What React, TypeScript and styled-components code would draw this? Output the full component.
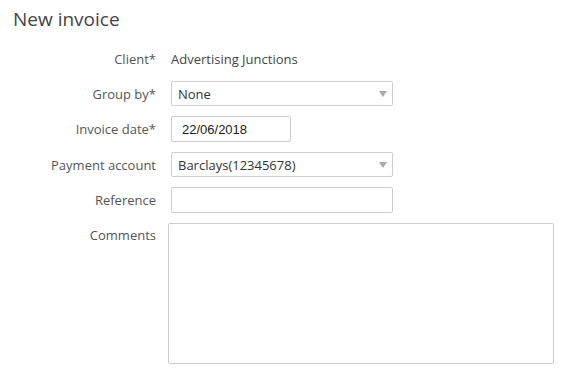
import React from 'react'
import styled, { createGlobalStyle } from 'styled-components'

const GlobalStyle = createGlobalStyle`
  body {
    margin: 0;
    background: #fff;
    font-family: "Open Sans", "Noto Sans", sans-serif;
  }
`

const Page = styled.div`
  padding: 6px 13px 0;
`

const Title = styled.h1`
  margin: 0 0 15px;
  font-size: 19px;
  font-weight: 400;
  color: #444;
  line-height: 26px;
`

const Form = styled.div`
  display: flex;
  flex-direction: column;
  gap: 10px;
`

const Row = styled.div<{ $top?: boolean }>`
  display: grid;
  grid-template-columns: 143px 1fr;
  column-gap: 15px;
  align-items: ${({ $top }) => ($top ? 'start' : 'center')};
  min-height: 24px;
`

const Label = styled.label<{ $top?: boolean }>`
  text-align: right;
  font-size: 13px;
  color: #555;
  padding-top: ${({ $top }) => ($top ? '3px' : '0')};
`

const Value = styled.span`
  font-size: 13px;
  color: #444;
`

const SelectBox = styled.div`
  position: relative;
  width: 222px;
  height: 25px;
  box-sizing: border-box;
  border: 1px solid #ccc;
  border-radius: 2px;
  display: flex;
  align-items: center;
  padding-left: 6px;
  font-size: 13px;
  color: #333;
`

const Caret = styled.span`
  position: absolute;
  right: 5px;
  top: 9px;
  width: 0;
  height: 0;
  border-left: 4px solid transparent;
  border-right: 4px solid transparent;
  border-top: 6px solid #aaa;
`

const TextInput = styled.input<{ $width: number }>`
  width: ${({ $width }) => $width}px;
  height: 26px;
  box-sizing: border-box;
  border: 1px solid #ccc;
  border-radius: 2px;
  padding: 0 10px;
  font-family: "Liberation Sans", Arial, sans-serif;
  font-size: 13px;
  color: #222;
  outline: none;
`

const Comments = styled.textarea`
  margin-left: -3px;
  width: 386px;
  height: 141px;
  box-sizing: border-box;
  border: 1px solid #ccc;
  border-radius: 2px;
  resize: none;
  outline: none;
`

const Select = ({ value }: { value: string }) => (
  <SelectBox>
    {value}
    <Caret />
  </SelectBox>
)

export default function App() {
  return (
    <Page>
      <GlobalStyle />
      <Title>New invoice</Title>
      <Form>
        <Row>
          <Label>Client*</Label>
          <Value>Advertising Junctions</Value>
        </Row>
        <Row>
          <Label>Group by*</Label>
          <Select value="None" />
        </Row>
        <Row>
          <Label>Invoice date*</Label>
          <TextInput $width={120} defaultValue="22/06/2018" />
        </Row>
        <Row>
          <Label>Payment account</Label>
          <Select value="Barclays(12345678)" />
        </Row>
        <Row>
          <Label>Reference</Label>
          <TextInput $width={222} />
        </Row>
        <Row $top>
          <Label $top>Comments</Label>
          <Comments />
        </Row>
      </Form>
    </Page>
  )
}
